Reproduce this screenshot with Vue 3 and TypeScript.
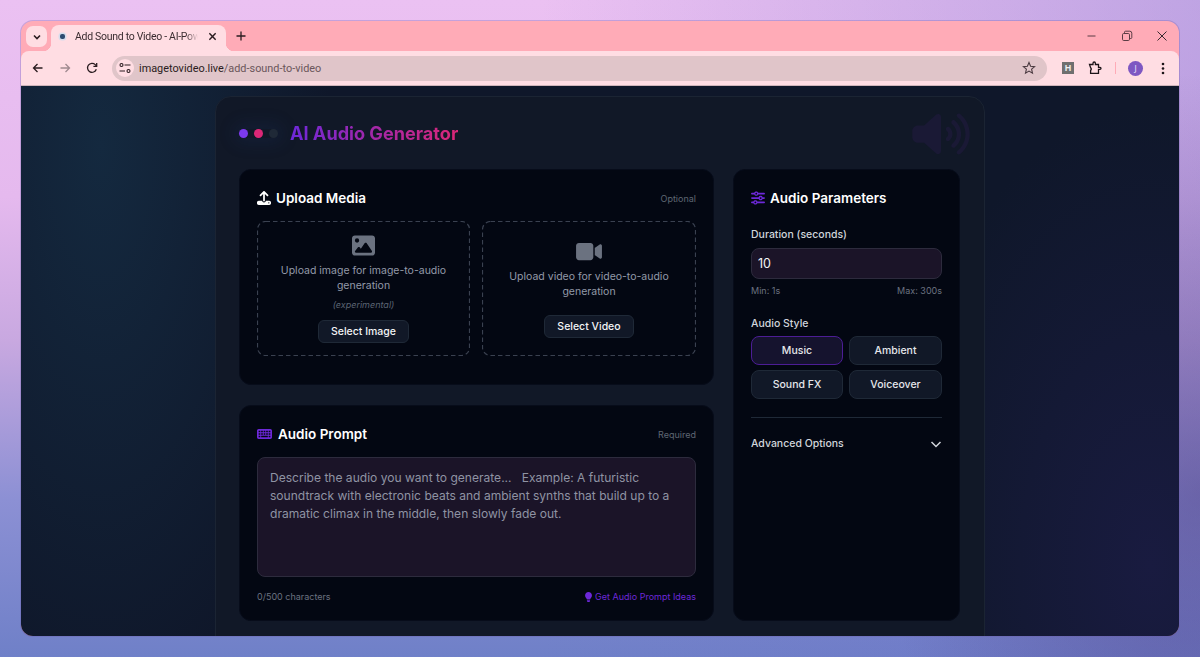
<template>
  <div class="desktop">
    <div class="window">
      <header class="tabstrip">
        <button class="tab-search">
          <svg width="10" height="10" viewBox="0 0 10 10"><path d="M2 3.500 5 6.500 8 3.500" fill="none" stroke="#2a1c20" stroke-width="1.600" /></svg>
        </button>
        <div class="tab">
          <span class="favicon"></span>
          <span class="tab-title">Add Sound to Video - AI-Power</span>
          <svg class="tab-close" width="9" height="9" viewBox="0 0 10 10"><path d="M1.500 1.500 8.500 8.500M8.500 1.500 1.500 8.500" stroke="#2a1c20" stroke-width="1.600" /></svg>
        </div>
        <svg class="new-tab" width="10" height="10" viewBox="0 0 10 10"><path d="M5 .5v9M.5 5h9" stroke="#2a1c20" stroke-width="1.300" /></svg>
        <div class="win-controls">
          <svg width="12" height="12" viewBox="0 0 12 12"><path d="M1.500 6h8" stroke="#5a3c44" stroke-width="1" /></svg>
          <svg width="12" height="12" viewBox="0 0 12 12" fill="none" stroke="#5a3c44"><rect x="1.500" y="3.500" width="7" height="7" rx="1.200" /><path d="M3.500 3V2.200q0-1 1-1h4.300q2 0 2 2v4.300q0 1-1 1H9" /></svg>
          <svg width="12" height="12" viewBox="0 0 12 12"><path d="M1.500 1.500l9 9M10.500 1.500l-9 9" stroke="#3a2a30" stroke-width="1" /></svg>
        </div>
      </header>

      <nav class="toolbar">
        <svg class="nav-icon" width="14" height="14" viewBox="0 0 14 14" fill="none" stroke="#2a1c20" stroke-width="1.300"><path d="M11.500 7H2.500M6.500 3 2.500 7l4 4" /></svg>
        <svg class="nav-icon" width="14" height="14" viewBox="0 0 14 14" fill="none" stroke="#a08a90" stroke-width="1.300"><path d="M2.500 7h9M7.500 3l4 4-4 4" /></svg>
        <svg class="nav-icon" width="14" height="14" viewBox="0 0 14 14" fill="none" stroke="#2a1c20" stroke-width="1.300"><path d="M11.300 8.300A4.500 4.500 0 1 1 10.200 3.600L11.500 5" /><path d="M11.700 2V5.300H8.400" /></svg>
        <div class="omnibox">
          <span class="site-chip">
            <svg width="12" height="12" viewBox="0 0 12 12" fill="none" stroke="#2a1c20" stroke-width="1.100"><circle cx="2.500" cy="3" r="1.500" /><path d="M5.500 3H11.500M.5 9H6" /><circle cx="9.500" cy="9" r="1.500" /></svg>
          </span>
          <span class="url"><b>imagetovideo.live</b>/add-sound-to-video</span>
          <svg class="star" width="14" height="14" viewBox="0 0 14 14" fill="none" stroke="#4a3a40" stroke-width="1.100"><path d="M7 1.500 8.600 5.200 12.600 5.600 9.600 8.200 10.500 12.200 7 10.100 3.500 12.200 4.400 8.200 1.400 5.600 5.400 5.200Z" /></svg>
        </div>
        <span class="ext-h">H</span>
        <svg class="puzzle" width="14" height="14" viewBox="0 0 14 14" fill="none" stroke="#1c1418" stroke-width="1.300"><path d="M1.500 3.500H5V2.200a1 1 0 0 1 2.400 0V3.500H10.500V6.300H12a1 1 0 0 1 0 2H10.500V12.300H2.600V9.500Q4 8 2.500 6.500Z" /></svg>
        <span class="tb-sep"></span>
        <span class="avatar">J</span>
        <svg class="kebab" width="4" height="13" viewBox="0 0 4 13" fill="#1c1418"><circle cx="2" cy="2" r="1.300" /><circle cx="2" cy="6.500" r="1.300" /><circle cx="2" cy="11" r="1.300" /></svg>
      </nav>

      <main class="page">
        <section class="panel">
          <svg class="speaker-bg" width="58" height="46" viewBox="0 0 640 512" fill="#1a1935"><path d="M533.600 32.500C598.500 85.200 640 165.800 640 256s-41.500 170.700-106.400 223.500c-10.300 8.400-25.400 6.800-33.800-3.500s-6.800-25.400 3.500-33.800C557.500 398.200 592 331.200 592 256s-34.500-142.200-88.700-186.300c-10.300-8.400-11.800-23.500-3.500-33.800s23.500-11.800 33.800-3.500zM473.100 107c43.200 35.200 70.900 88.900 70.900 149s-27.700 113.800-70.900 149c-10.300 8.400-25.400 6.800-33.800-3.500s-6.800-25.400 3.500-33.800C475.300 341.300 496 301.100 496 256s-20.700-85.300-53.200-111.800c-10.300-8.400-11.800-23.500-3.500-33.800s23.500-11.800 33.800-3.500zm-60.500 74.500C434.100 199.100 448 225.900 448 256s-13.900 56.900-35.400 74.500c-10.300 8.400-25.400 6.800-33.800-3.500s-6.800-25.400 3.500-33.800C393.100 284.400 400 271 400 256s-6.900-28.400-17.700-37.300c-10.300-8.400-11.800-23.500-3.500-33.800s23.500-11.800 33.800-3.500zM301.100 34.800C312.600 40 320 51.400 320 64V448c0 12.600-7.400 24-18.900 29.200s-25 3.100-34.400-5.300L131.800 352H64c-35.300 0-64-28.700-64-64V224c0-35.300 28.700-64 64-64h67.800L266.700 40.100c9.400-8.400 22.900-10.400 34.400-5.300z" /></svg>

          <div class="panel-head">
            <div class="dots">
              <span class="dot dot--violet"></span>
              <span class="dot dot--pink"></span>
              <span class="dot dot--slate"></span>
            </div>
            <h1 class="panel-title">AI Audio Generator</h1>
          </div>

          <div class="columns">
            <div class="col-left">
              <article class="card">
                <div class="card-head">
                  <h2 class="card-title">
                    <svg width="14" height="14" viewBox="0 0 512 512" fill="#fff"><path d="M288 109.300V352c0 17.700-14.300 32-32 32s-32-14.300-32-32V109.300l-73.400 73.400c-12.500 12.500-32.800 12.500-45.300 0s-12.500-32.800 0-45.300l128-128c12.500-12.500 32.800-12.500 45.300 0l128 128c12.500 12.500 12.500 32.800 0 45.300s-32.800 12.500-45.300 0L288 109.300zM64 352H192c0 35.300 28.700 64 64 64s64-28.700 64-64H448c35.300 0 64 28.700 64 64v32c0 35.300-28.700 64-64 64H64c-35.300 0-64-28.700-64-64V416c0-35.300 28.700-64 64-64zM432 456a24 24 0 1 0 0-48 24 24 0 1 0 0 48z" /></svg>
                    Upload Media
                  </h2>
                  <span class="card-tag">Optional</span>
                </div>
                <div class="drops">
                  <div class="drop">
                    <svg class="drop-border"><rect x=".5" y=".5" rx="8" /></svg>
                    <svg width="23" height="23" viewBox="0 0 512 512" fill="#6b7280"><path d="M0 96C0 60.700 28.700 32 64 32H448c35.300 0 64 28.700 64 64V416c0 35.300-28.700 64-64 64H64c-35.300 0-64-28.700-64-64V96zM323.800 202.500c-4.500-6.600-11.900-10.500-19.800-10.500s-15.400 3.900-19.800 10.500l-87 127.600L170.700 297c-4.600-5.700-11.500-9-18.700-9s-14.200 3.300-18.700 9l-64 80c-5.800 7.200-6.900 17.100-2.900 25.400s12.400 13.600 21.600 13.600h96 32H424c8.900 0 17.100-4.900 21.200-12.800s3.600-17.400-1.400-24.700l-120-176zM112 192a48 48 0 1 0 0-96 48 48 0 1 0 0 96z" /></svg>
                    <p class="drop-text">Upload image for image-to-audio generation</p>
                    <p class="drop-note">(experimental)</p>
                    <button class="select-btn">Select Image</button>
                  </div>
                  <div class="drop">
                    <svg class="drop-border"><rect x=".5" y=".5" rx="8" /></svg>
                    <svg width="26" height="23" viewBox="0 0 576 512" fill="#6b7280"><path d="M0 128C0 92.700 28.700 64 64 64H320c35.300 0 64 28.700 64 64V384c0 35.300-28.700 64-64 64H64c-35.300 0-64-28.700-64-64V128zM559.100 99.800c10.400 5.600 16.900 16.400 16.900 28.200V384c0 11.800-6.500 22.600-16.900 28.200s-23 5-32.900-1.600l-96-64L416 337.100V320 192 174.900l14.200-9.500 96-64c9.800-6.500 22.400-7.200 32.900-1.600z" /></svg>
                    <p class="drop-text">Upload video for video-to-audio generation</p>
                    <button class="select-btn">Select Video</button>
                  </div>
                </div>
              </article>

              <article class="card">
                <div class="card-head">
                  <h2 class="card-title">
                    <svg class="kb-icon" width="15" height="14" viewBox="0 0 576 512" fill="#6d28d9"><path d="M64 64C28.700 64 0 92.700 0 128V384c0 35.300 28.700 64 64 64H512c35.300 0 64-28.700 64-64V128c0-35.300-28.700-64-64-64H64zm16 64h32c8.800 0 16 7.200 16 16v32c0 8.800-7.200 16-16 16H80c-8.800 0-16-7.200-16-16V144c0-8.800 7.200-16 16-16zM64 240c0-8.800 7.200-16 16-16h32c8.800 0 16 7.200 16 16v32c0 8.800-7.200 16-16 16H80c-8.800 0-16-7.200-16-16V240zm16 80h32c8.800 0 16 7.200 16 16v32c0 8.800-7.200 16-16 16H80c-8.800 0-16-7.200-16-16V336c0-8.800 7.200-16 16-16zm80-176c0-8.800 7.200-16 16-16h32c8.800 0 16 7.200 16 16v32c0 8.800-7.200 16-16 16H176c-8.800 0-16-7.200-16-16V144zm16 80h32c8.800 0 16 7.200 16 16v32c0 8.800-7.200 16-16 16H176c-8.800 0-16-7.200-16-16V240c0-8.800 7.200-16 16-16zM160 336c0-8.800 7.200-16 16-16H400c8.800 0 16 7.200 16 16v32c0 8.800-7.200 16-16 16H176c-8.800 0-16-7.200-16-16V336zM272 128h32c8.800 0 16 7.200 16 16v32c0 8.800-7.200 16-16 16H272c-8.800 0-16-7.200-16-16V144c0-8.800 7.200-16 16-16zM256 240c0-8.800 7.200-16 16-16h32c8.800 0 16 7.200 16 16v32c0 8.800-7.200 16-16 16H272c-8.800 0-16-7.200-16-16V240zM368 128h32c8.800 0 16 7.200 16 16v32c0 8.800-7.200 16-16 16H368c-8.800 0-16-7.200-16-16V144c0-8.800 7.200-16 16-16zM352 240c0-8.800 7.200-16 16-16h32c8.800 0 16 7.200 16 16v32c0 8.800-7.200 16-16 16H368c-8.800 0-16-7.200-16-16V240zM464 128h32c8.800 0 16 7.200 16 16v32c0 8.800-7.200 16-16 16H464c-8.800 0-16-7.200-16-16V144c0-8.800 7.200-16 16-16zM448 240c0-8.800 7.200-16 16-16h32c8.800 0 16 7.200 16 16v32c0 8.800-7.200 16-16 16H464c-8.800 0-16-7.200-16-16V240zm16 80h32c8.800 0 16 7.200 16 16v32c0 8.800-7.200 16-16 16H464c-8.800 0-16-7.200-16-16V336c0-8.800 7.200-16 16-16z" /></svg>
                    Audio Prompt
                  </h2>
                  <span class="card-tag">Required</span>
                </div>
                <div class="prompt-box">Describe the audio you want to generate...&nbsp;&nbsp; Example: A futuristic soundtrack with electronic beats and ambient synths that build up to a dramatic climax in the middle, then slowly fade out.</div>
                <div class="prompt-foot">
                  <span class="counter">0/500 characters</span>
                  <a class="ideas">
                    <svg width="7" height="10" viewBox="0 0 352 512" fill="#6d28d9"><path d="M96.060 454.350c.01 6.290 1.870 12.450 5.360 17.690l17.090 25.690a31.990 31.990 0 0 0 26.640 14.280h61.710a31.990 31.990 0 0 0 26.640-14.280l17.090-25.690a31.989 31.989 0 0 0 5.360-17.690l.04-38.350H96.010l.05 38.350zM0 176c0 44.370 16.450 84.850 43.560 115.780 16.520 18.850 42.360 58.230 52.210 91.450.04.26.07.52.11.78h160.240c.04-.26.07-.51.11-.78 9.850-33.220 35.690-72.600 52.210-91.450C335.550 260.850 352 220.370 352 176 352 78.610 272.910-.3 175.450 0 73.440.31 0 82.970 0 176z" /></svg>
                    Get Audio Prompt Ideas
                  </a>
                </div>
              </article>
            </div>

            <aside class="card card--params">
              <h2 class="card-title card-title--params">
                <svg width="14" height="14" viewBox="0 0 512 512" fill="#6d28d9"><path d="M0 416c0 17.700 14.300 32 32 32l54.700 0c12.300 28.300 40.500 48 73.300 48s61-19.700 73.300-48L480 448c17.700 0 32-14.300 32-32s-14.300-32-32-32l-246.700 0c-12.300-28.300-40.500-48-73.300-48s-61 19.700-73.300 48L32 384c-17.700 0-32 14.300-32 32zm128 0a32 32 0 1 1 64 0 32 32 0 1 1 -64 0zM320 256a32 32 0 1 1 64 0 32 32 0 1 1 -64 0zm32-80c-32.800 0-61 19.700-73.300 48L32 224c-17.700 0-32 14.300-32 32s14.300 32 32 32l246.700 0c12.300 28.300 40.500 48 73.300 48s61-19.700 73.300-48l54.700 0c17.700 0 32-14.300 32-32s-14.300-32-32-32l-54.700 0c-12.300-28.300-40.500-48-73.300-48zM192 128a32 32 0 1 1 0-64 32 32 0 1 1 0 64zm73.300-64C253 35.700 224.800 16 192 16s-61 19.700-73.300 48L32 64C14.300 64 0 78.300 0 96s14.300 32 32 32l86.700 0c12.300 28.300 40.500 48 73.300 48s61-19.700 73.300-48L480 128c17.700 0 32-14.300 32-32s-14.300-32-32-32L265.300 64z" /></svg>
                Audio Parameters
              </h2>

              <label class="field-label">Duration (seconds)</label>
              <div class="duration-input">10</div>
              <div class="limits"><span>Min: 1s</span><span>Max: 300s</span></div>

              <label class="field-label field-label--style">Audio Style</label>
              <div class="styles">
                <button v-for="s in styles" :key="s" class="style-btn" :class="{ 'style-btn--active': s === activeStyle }">{{ s }}</button>
              </div>

              <div class="advanced">
                <span>Advanced Options</span>
                <svg width="12" height="12" viewBox="0 0 12 12" fill="none" stroke="#d1d5db" stroke-width="1.500"><path d="M1.500 4 6 8.500 10.500 4" /></svg>
              </div>
            </aside>
          </div>
        </section>
      </main>
    </div>
  </div>
</template>

<script setup lang="ts">
const styles: string[] = ['Music', 'Ambient', 'Sound FX', 'Voiceover']
const activeStyle = 'Music'
</script>

<style>
html, body {
  margin: 0;
  height: 100%;
  overflow: hidden;
}
</style>

<style scoped>
.desktop {
  box-sizing: border-box;
  width: 1200px;
  height: 657px;
  padding: 21px;
  background:
    radial-gradient(ellipse 320px 420px at 100% 75%, rgba(70, 50, 110, 0.4) 0%, rgba(70, 50, 110, 0) 100%),
    linear-gradient(90deg, rgba(110, 110, 200, 0) 45%, rgba(110, 110, 200, 0.35) 100%),
    linear-gradient(180deg, #ebc1f2 0%, #e5b9ee 30%, #c8a8e0 52%, #8c90d4 76%, #6f80c8 100%);
  font-family: Inter, "Liberation Sans", sans-serif;
}

.window {
  height: 615px;
  border-radius: 12px;
  overflow: hidden;
  display: flex;
  flex-direction: column;
  background: #ffabb7;
  box-shadow: 0 0 0 1px rgba(110, 90, 170, 0.3);
}

.tabstrip {
  height: 30px;
  flex: none;
  display: flex;
  align-items: flex-end;
}

.tab-search {
  width: 21px;
  height: 21px;
  margin: 0 4px 4px 5px;
  padding: 0;
  border: 0;
  border-radius: 7px;
  background: #ffdde3;
  display: flex;
  align-items: center;
  justify-content: center;
}

.tab {
  width: 175px;
  height: 26px;
  background: #ffdde3;
  border-radius: 8px 8px 0 0;
  display: flex;
  align-items: center;
  padding: 0 9px 4px;
  box-sizing: border-box;
  font: 10.5px Roboto, sans-serif;
  color: #3a2c30;
  gap: 10px;
  position: relative;
}

/* the curved feet of the active tab */
.tab::before,
.tab::after {
  content: "";
  position: absolute;
  bottom: 0;
  width: 8px;
  height: 8px;
}

.tab::before {
  left: -8px;
  background: radial-gradient(circle at 0 0, transparent 8px, #ffdde3 8.5px);
}

.tab::after {
  right: -8px;
  background: radial-gradient(circle at 100% 0, transparent 8px, #ffdde3 8.5px);
}

.favicon {
  flex: none;
  width: 5px;
  height: 5px;
  border-radius: 2px;
  background: #2d4a70;
  box-shadow: 0 0 0 1.5px #d5dcec;
}

.tab-title {
  flex: 1;
  white-space: nowrap;
  min-width: 0;
  letter-spacing: -0.3px;
  -webkit-mask-image: linear-gradient(90deg, #000 90%, transparent);
  mask-image: linear-gradient(90deg, #000 90%, transparent);
}

.tab-close {
  flex: none;
}

.new-tab {
  margin: 0 0 10px 10px;
}

.win-controls {
  margin-left: auto;
  display: flex;
  gap: 23px;
  padding: 0 11px 9px 0;
}

.toolbar {
  height: 35px;
  flex: none;
  background: #ffdde3;
  border-radius: 8px 8px 0 0;
  display: flex;
  align-items: center;
  box-sizing: border-box;
  border-bottom: 1px solid #cfb4ba;
  padding-left: 10px;
}

.nav-icon {
  flex: none;
  margin-right: 13px;
}

.omnibox {
  flex: none;
  width: 935px;
  height: 25px;
  border-radius: 13px;
  background: #e0c5c9;
  display: flex;
  align-items: center;
  padding: 0 11px 0 4px;
  box-sizing: border-box;
  font: 10.9px Roboto, sans-serif;
  color: #6a565b;
}

.site-chip {
  width: 18px;
  height: 18px;
  border-radius: 50%;
  background: #ffdde3;
  display: flex;
  align-items: center;
  justify-content: center;
  margin-right: 5px;
}

.url b {
  font-weight: 400;
  color: #2a1c20;
}

.star {
  margin-left: auto;
}

.ext-h {
  flex: none;
  width: 12px;
  height: 12px;
  margin-left: 15px;
  background: #6f6f6f;
  color: #f0f0f0;
  font: 700 9px/12px "Liberation Sans", sans-serif;
  text-align: center;
}

.puzzle {
  flex: none;
  margin-left: 14px;
}

.tb-sep {
  flex: none;
  width: 1px;
  height: 12px;
  background: #ffabb7;
  margin-left: 13px;
}

.avatar {
  flex: none;
  width: 15px;
  height: 15px;
  margin-left: 12px;
  border-radius: 50%;
  background: #7e57c2;
  color: #f0e6ff;
  font: 8px/15px "Noto Sans", sans-serif;
  text-align: center;
}

.kebab {
  flex: none;
  margin-left: 18px;
}

.page {
  flex: 1;
  min-height: 0;
  overflow: hidden;
  background:
    radial-gradient(ellipse 230px 560px at 80px 60px, #14293f 0%, rgba(20, 41, 63, 0) 100%),
    radial-gradient(ellipse 260px 460px at 1130px 480px, #191b40 0%, rgba(25, 27, 64, 0) 100%),
    #0f172a;
  display: flex;
  justify-content: center;
  padding-top: 10px;
  box-sizing: border-box;
}

.panel {
  width: 770px;
  height: 620px;
  flex: none;
  box-sizing: border-box;
  padding: 0 23px;
  background: #111827;
  border: 1px solid #1b2433;
  border-radius: 16px;
  position: relative;
}

.speaker-bg {
  position: absolute;
  top: 14px;
  right: 14px;
}

.panel-head {
  height: 72px;
  display: flex;
  align-items: center;
  gap: 12px;
}

.dots {
  display: flex;
  gap: 6px;
  box-shadow: 0 0 16px 6px rgba(30, 58, 110, 0.18);
  border-radius: 10px;
}

.dot {
  width: 9px;
  height: 9px;
  border-radius: 50%;
}

.dot--violet {
  background: #7c3aed;
}

.dot--pink {
  background: #db2777;
}

.dot--slate {
  background: #1f2937;
}

.panel-title {
  margin: 0;
  font-size: 18.1px;
  font-weight: 700;
  line-height: 24px;
  background: linear-gradient(90deg, #6d28d9, #db2777);
  -webkit-background-clip: text;
  background-clip: text;
  color: transparent;
}

.columns {
  display: grid;
  grid-template-columns: 475px 227px;
  gap: 19px;
  align-items: stretch;
}

.col-left {
  display: flex;
  flex-direction: column;
  gap: 20px;
}

.card {
  box-sizing: border-box;
  height: 216px;
  background: #030712;
  border: 1px solid #070c1a;
  border-radius: 12px;
  padding: 17px 17px;
}

.card-head {
  display: flex;
  justify-content: space-between;
  align-items: center;
  height: 22px;
  margin-bottom: 12px;
}

.card-title {
  margin: 0;
  display: flex;
  align-items: center;
  gap: 5px;
  font-size: 13.5px;
  font-weight: 600;
  line-height: 22px;
  color: #fff;
}

.kb-icon {
  margin-right: 1px;
}

.card-tag {
  font-size: 9px;
  color: #5f6673;
}

.drops {
  display: grid;
  grid-template-columns: 213px 214px;
  gap: 12px;
}

.drop {
  box-sizing: border-box;
  height: 135px;
  position: relative;
  display: flex;
  flex-direction: column;
  align-items: center;
  justify-content: center;
  padding: 0 17px;
  text-align: center;
}

.drop-border {
  position: absolute;
  inset: 0;
  width: 100%;
  height: 100%;
  pointer-events: none;
}

.drop-border rect {
  width: calc(100% - 1px);
  height: calc(100% - 1px);
  fill: none;
  stroke: #3a4150;
  stroke-width: 1.2;
  stroke-dasharray: 4.5 3;
}

.drop-text {
  margin: 6.5px 0 7.5px;
  font-size: 10.5px;
  line-height: 15px;
  color: #939aa9;
}

.drop-note {
  margin: -3px 0 .5px;
  font-size: 9px;
  font-style: italic;
  line-height: 14px;
  color: #5b6473;
}

.select-btn {
  margin-top: 8px;
  height: 23px;
  padding: 0 12px;
  font: 500 10.5px Inter, sans-serif;
  color: #f3f4f6;
  background: #111827;
  border: 1px solid #1f2937;
  border-radius: 6px;
}

.prompt-box {
  box-sizing: border-box;
  height: 120px;
  padding: 11px 12px;
  font-size: 12.06px;
  line-height: 18px;
  color: #8f93a3;
  background: #1b1428;
  border: 1px solid #2d2b3d;
  border-radius: 8px;
}

.prompt-foot {
  display: flex;
  justify-content: space-between;
  align-items: center;
  margin-top: 13px;
  font-size: 9px;
  line-height: 14px;
}

.counter {
  color: #6b7280;
}

.ideas {
  display: flex;
  align-items: center;
  gap: 3px;
  color: #6d28d9;
}

.card--params {
  height: 452px;
}

.card-title--params {
  margin-bottom: 19px;
}

.field-label {
  display: block;
  font-size: 10.5px;
  font-weight: 500;
  line-height: 14px;
  color: #d1d5db;
}

.field-label--style {
  margin-top: 19px;
}

.duration-input {
  box-sizing: border-box;
  height: 31px;
  margin-top: 6px;
  padding: 0 6px;
  font-size: 12.5px;
  line-height: 29px;
  color: #f3f4f6;
  background: #1b1428;
  border: 1px solid #2d2b3d;
  border-radius: 8px;
}

.limits {
  display: flex;
  justify-content: space-between;
  margin-top: 5px;
  font-size: 9px;
  line-height: 14px;
  color: #6b7280;
}

.styles {
  display: grid;
  grid-template-columns: 92px 93px;
  gap: 5px 6px;
  margin-top: 5px;
}

.style-btn {
  height: 29px;
  padding: 0;
  font: 500 10.5px Inter, sans-serif;
  color: #e5e7eb;
  background: #111827;
  border: 1px solid #1f2937;
  border-radius: 8px;
}

.style-btn--active {
  background: #15132e;
  border-color: #4c1d95;
}

.advanced {
  display: flex;
  justify-content: space-between;
  align-items: center;
  margin-top: 18px;
  padding-top: 19px;
  border-top: 1px solid #1f2937;
  font-size: 10.5px;
  font-weight: 500;
  line-height: 14px;
  color: #d1d5db;
}
</style>
